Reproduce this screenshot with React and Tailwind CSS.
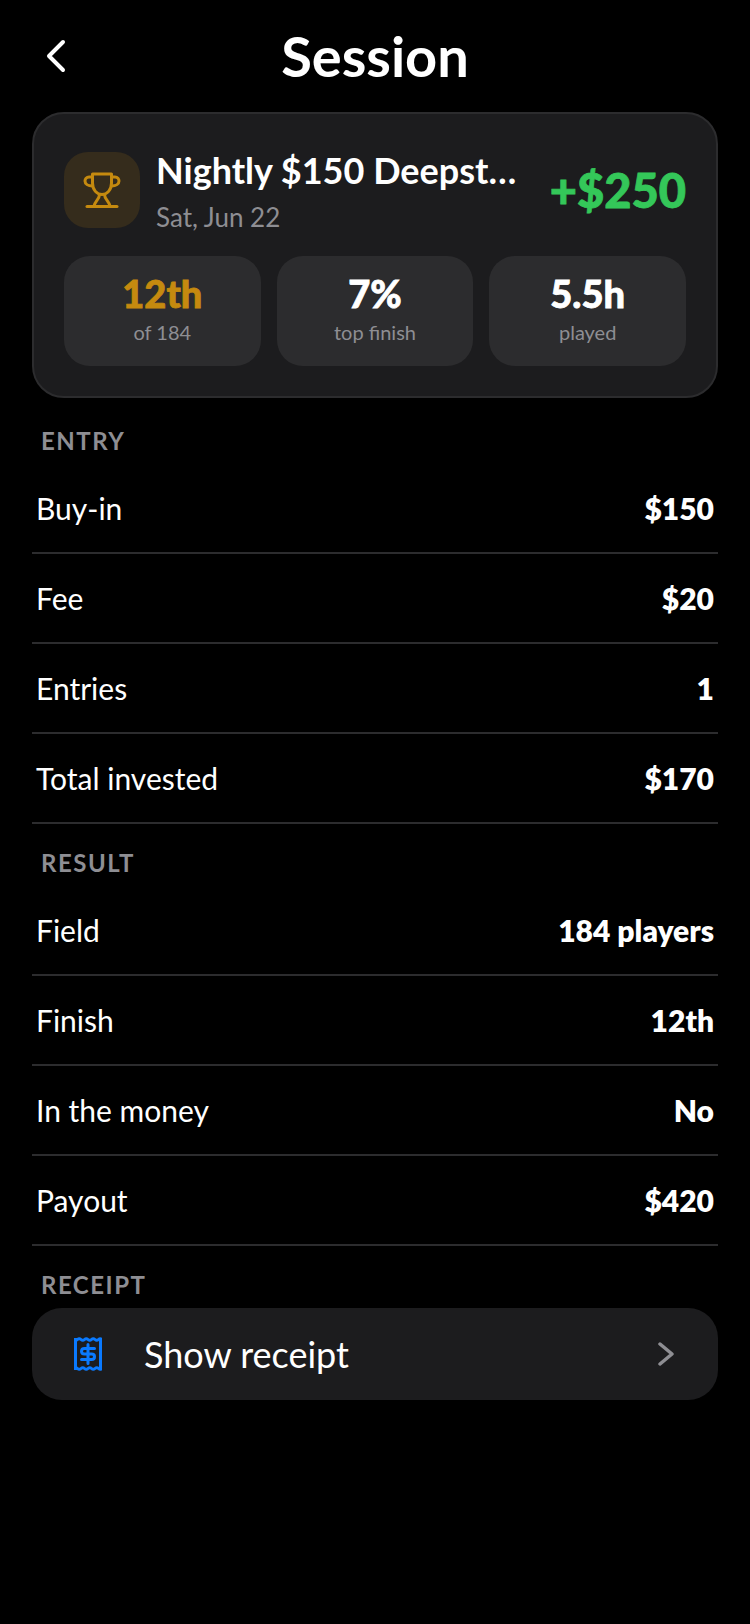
import React from "react";

const entryRows = [
  ["Buy-in", "$150"],
  ["Fee", "$20"],
  ["Entries", "1"],
  ["Total invested", "$170"],
];

const resultRows = [
  ["Field", "184 players"],
  ["Finish", "12th"],
  ["In the money", "No"],
  ["Payout", "$420"],
];

function Stat({ value, label, gold }) {
  return (
    <div className="flex h-[110px] flex-col items-center rounded-[26px] bg-[#2c2c2e] pt-[15px]">
      <div className={`text-[38px] leading-[44px] font-black [-webkit-text-stroke:0.8px_currentColor] ${gold ? "text-[#c58a0f]" : "text-white"}`}>{value}</div>
      <div className="mt-[4px] text-[20px] leading-[26px] text-[#8e8e93]">{label}</div>
    </div>
  );
}

function Row({ label, value }) {
  return (
    <div className="flex h-[90px] items-center justify-between border-b-2 border-[#2c2c2e] px-[4px] text-[30px]">
      <span className="text-white">{label}</span>
      <span className="font-extrabold text-white">{value}</span>
    </div>
  );
}

function SectionLabel({ children, className }) {
  return <div className={`px-[9px] text-[24px] leading-[30px] font-bold tracking-[1.5px] text-[#8e8e93] ${className}`}>{children}</div>;
}

export default function App() {
  return (
    <div className="min-h-[1624px] bg-black px-[32px] font-['Lato','Noto_Sans',sans-serif] text-white">
      <div className="relative flex h-[112px] items-center justify-center">
        <svg className="absolute top-[38px] left-[13px]" width="24" height="36" viewBox="0 0 24 36" fill="none" stroke="white" strokeWidth="4" strokeLinecap="round" strokeLinejoin="round">
          <path d="M18 4 L4 18 L18 32" />
        </svg>
        <h1 className="text-[56px] font-bold">Session</h1>
      </div>

      <div className="rounded-[32px] border-2 border-[#2c2c2e] bg-[#1c1c1e] px-[30px] pt-[38px] pb-[30px]">
        <div className="flex h-[76px] items-center">
          <div className="flex h-[76px] w-[76px] shrink-0 items-center justify-center rounded-[24px] bg-[#352c1c]">
            <svg width="38" height="38" viewBox="0 0 38 38" fill="none" stroke="#c58a0f" strokeWidth="3" strokeLinejoin="round" strokeLinecap="round">
              <path d="M9.5 3 H28.5 V12 C28.5 19 24 23.5 19 23.5 C14 23.5 9.5 19 9.5 12 Z" />
              <path d="M9.5 6 H6 C3.5 6 2 8 2 10 C2 13 5 15 9.5 15" />
              <path d="M28.5 6 H32 C34.5 6 36 8 36 10 C36 13 33 15 28.5 15" />
              <path d="M16.5 23.5 C16.5 28 12 30 11 35" />
              <path d="M21.5 23.5 C21.5 28 26 30 27 35" />
              <path d="M4 35.5 H34" />
            </svg>
          </div>
          <div className="mr-[20px] ml-[16px] min-w-0 flex-1">
            <div className="text-[36px] leading-[42px] font-bold whitespace-nowrap">Nightly $150 Deepst…</div>
            <div className="mt-[11px] text-[26px] leading-[30px] text-[#8e8e93]">Sat, Jun 22</div>
          </div>
          <div className="shrink-0 text-[47px] font-black text-[#34c759] [-webkit-text-stroke:0.8px_currentColor]">+$250</div>
        </div>
        <div className="mt-[28px] grid grid-cols-3 gap-[16px]">
          <Stat value="12th" label="of 184" gold />
          <Stat value="7%" label="top finish" />
          <Stat value="5.5h" label="played" />
        </div>
      </div>

      <SectionLabel className="pt-[28px] pb-[8px]">ENTRY</SectionLabel>
      {entryRows.map(([label, value]) => (
        <Row key={label} label={label} value={value} />
      ))}

      <SectionLabel className="pt-[24px] pb-[8px]">RESULT</SectionLabel>
      {resultRows.map(([label, value]) => (
        <Row key={label} label={label} value={value} />
      ))}

      <SectionLabel className="pt-[24px] pb-[8px]">RECEIPT</SectionLabel>
      <div className="flex h-[92px] items-center rounded-[30px] bg-[#1c1c1e] pr-[44px] pl-[42px]">
        <svg width="28" height="34" viewBox="0 0 28 34" fill="none" stroke="#0a7aff" strokeWidth="3">
          <path d="M1.5 1 V33 M26.5 1 V33" />
          <path d="M0 2.5 q1.75 1.6 3.5 0 t3.5 0 t3.5 0 t3.5 0 t3.5 0 t3.5 0 t3.5 0 t3.5 0" />
          <path d="M0 31.5 q1.75 -1.6 3.5 0 t3.5 0 t3.5 0 t3.5 0 t3.5 0 t3.5 0 t3.5 0 t3.5 0" />
          <path d="M20.5 11.5 H10.5 C8.7 11.5 7.5 12.8 7.5 14.3 C7.5 15.8 8.7 17 10.5 17 H17.5 C19.3 17 20.5 18.2 20.5 19.7 C20.5 21.2 19.3 22.5 17.5 22.5 H7.5 M14 7.5 V26.5" strokeLinecap="round" />
        </svg>
        <span className="ml-[42px] flex-1 text-[36px]">Show receipt</span>
        <svg width="16" height="24" viewBox="0 0 16 24" fill="none" stroke="#8e8e93" strokeWidth="3.5" strokeLinecap="round" strokeLinejoin="round">
          <path d="M2 2 L14 12 L2 22" />
        </svg>
      </div>
    </div>
  );
}
